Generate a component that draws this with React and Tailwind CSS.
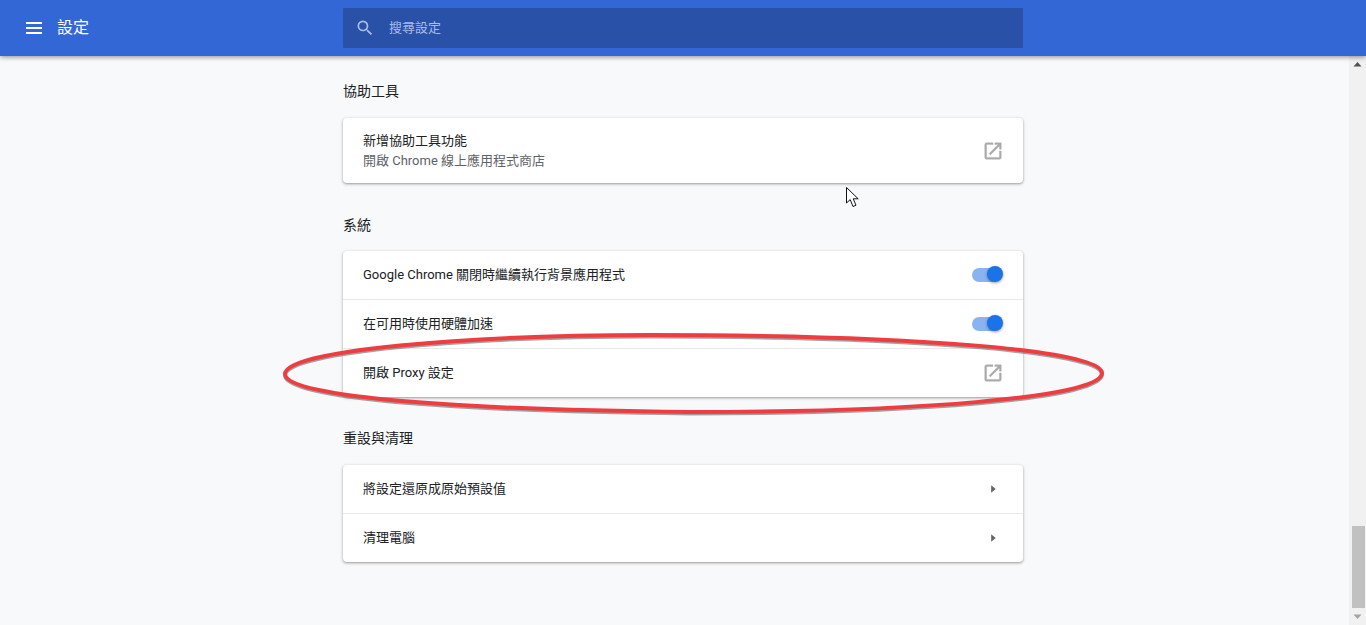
import React from "react";

const FONT = "font-['Roboto','Noto_Sans_CJK_TC',sans-serif]";

function External() {
  return (
    <svg width="22" height="22" viewBox="0 0 24 24" fill="#a9aaad" stroke="#a9aaad" strokeWidth="0.4" className="block">
      <path d="M19 19H5V5h7V3H5a2 2 0 0 0-2 2v14a2 2 0 0 0 2 2h14c1.1 0 2-.9 2-2v-7h-2v7zM14 3v2h3.59l-9.83 9.83 1.41 1.41L19 6.41V10h2V3h-7z" />
    </svg>
  );
}

function Toggle() {
  return (
    <div className="relative w-[32px] h-[18px]">
      <div className="absolute left-0 top-[2px] w-[28px] h-[14px] rounded-full bg-[#8ab4f1]" />
      <div className="absolute left-[15px] top-0 w-[16px] h-[16px] rounded-full bg-[#1a73e8] shadow-[0_1px_3px_rgba(0,0,0,0.4)]" />
    </div>
  );
}

function Arrow() {
  return (
    <svg width="22" height="22" viewBox="0 0 24 24" fill="#5f6368" className="block">
      <path d="M10 8v8l5-4z" />
    </svg>
  );
}

function Row({ label, right, border }) {
  return (
    <div className={`flex items-center justify-between pl-[20px] pr-[19px] ${border ? "h-[49px] border-t border-[#e8e9eb]" : "h-[48px]"}`}>
      <span className="text-[13px] text-[#202124]">{label}</span>
      {right}
    </div>
  );
}

function Card({ children, className = "" }) {
  return (
    <div className={`bg-white rounded-[4px] shadow-[0_1px_2px_rgba(60,64,67,0.35),0_1px_3px_1px_rgba(60,64,67,0.15)] ${className}`}>
      {children}
    </div>
  );
}

function Heading({ children, className = "" }) {
  return <h2 className={`text-[14px] leading-[20px] text-[#202124] font-normal ${className}`}>{children}</h2>;
}

export default function App() {
  return (
    <div className={`relative h-[625px] w-[1366px] overflow-hidden bg-[#f8f9fa] flex flex-col ${FONT}`}>
      <header className="relative z-10 h-[56px] shrink-0 bg-[#3367d6] flex items-center shadow-[0_1px_5px_rgba(0,0,0,0.45)]">
        <div className="w-[343px] flex items-center pl-[26px]">
          <div className="w-[16px] flex flex-col gap-[3px]">
            <div className="h-[2px] bg-white" />
            <div className="h-[2px] bg-white" />
            <div className="h-[2px] bg-white" />
          </div>
          <span className="ml-[15px] text-[16px] text-white">設定</span>
        </div>
        <div className="w-[680px] h-[40px] rounded-[1px] bg-[#2a51a8] flex items-center pl-[12px]">
          <svg width="20" height="20" viewBox="0 0 24 24" fill="#a9bce6" className="block">
            <path d="M15.5 14h-.79l-.28-.27A6.47 6.47 0 0 0 16 9.5 6.5 6.5 0 1 0 9.5 16c1.61 0 3.09-.59 4.23-1.57l.27.28v.79l5 4.99L20.49 19l-4.99-5zm-6 0C7.01 14 5 11.99 5 9.5S7.01 5 9.5 5 14 7.01 14 9.5 11.99 14 9.5 14z" />
          </svg>
          <span className="ml-[14px] text-[13px] text-[#a9bce6]">搜尋設定</span>
        </div>
      </header>

      <div className="flex flex-1 min-h-0">
        <main className="flex-1 pl-[343px] pt-[25px]">
          <div className="w-[680px]">
            <Heading>協助工具</Heading>
            <Card className="mt-[17px] h-[65px] flex items-center justify-between pl-[20px] pr-[19px]">
              <div className="text-[13px] leading-[20px]">
                <div className="text-[#202124]">新增協助工具功能</div>
                <div className="text-[#5f6368]">開啟 Chrome 線上應用程式商店</div>
              </div>
              <External />
            </Card>

            <Heading className="mt-[32px]">系統</Heading>
            <Card className="mt-[16px]">
              <Row label="Google Chrome 關閉時繼續執行背景應用程式" right={<Toggle />} />
              <Row label="在可用時使用硬體加速" right={<Toggle />} border />
              <Row label="開啟 Proxy 設定" right={<External />} border />
            </Card>

            <Heading className="mt-[31px]">重設與清理</Heading>
            <Card className="mt-[17px]">
              <Row label="將設定還原成原始預設值" right={<Arrow />} />
              <Row label="清理電腦" right={<Arrow />} border />
            </Card>
          </div>
        </main>

        <aside className="w-[17px] shrink-0 bg-[#f1f1f1] flex flex-col items-center justify-between">
          <svg width="17" height="17" viewBox="0 0 17 17" fill="#505050" className="block">
            <path d="M4.5 10.5h8L8.5 6z" />
          </svg>
          <div className="flex flex-col items-center">
            <div className="w-[13px] h-[82px] ml-[1px] bg-[#c1c1c1]" />
            <svg width="17" height="17" viewBox="0 0 17 17" fill="#a3a3a3" className="block">
              <path d="M4.5 6.5h8L8.5 11z" />
            </svg>
          </div>
        </aside>
      </div>

      <svg className="absolute left-[270px] top-[320px] z-20" width="850" height="105" viewBox="0 0 850 105" fill="none">
        <path d="M380 15C200 15 15 30 15 54C15 78 200 90 420 92C640 92 832 78 832 53C832 30 640 15 380 15Z" stroke="#7a7a7a" strokeWidth="4" transform="translate(0 1.5)" opacity="0.7" />
        <path d="M380 15C200 15 15 30 15 54C15 78 200 90 420 92C640 92 832 78 832 53C832 30 640 15 380 15Z" stroke="#ee3c40" strokeWidth="4" />
      </svg>

      <svg className="absolute left-[846px] top-[187px] z-20" width="16" height="22" viewBox="0 0 16 22">
        <path d="M0.5 0.5V16L4.2 12.6L7 19.5L10 18.2L7.2 11.8H12.2Z" fill="#fff" stroke="#111" strokeWidth="1" />
      </svg>
    </div>
  );
}
